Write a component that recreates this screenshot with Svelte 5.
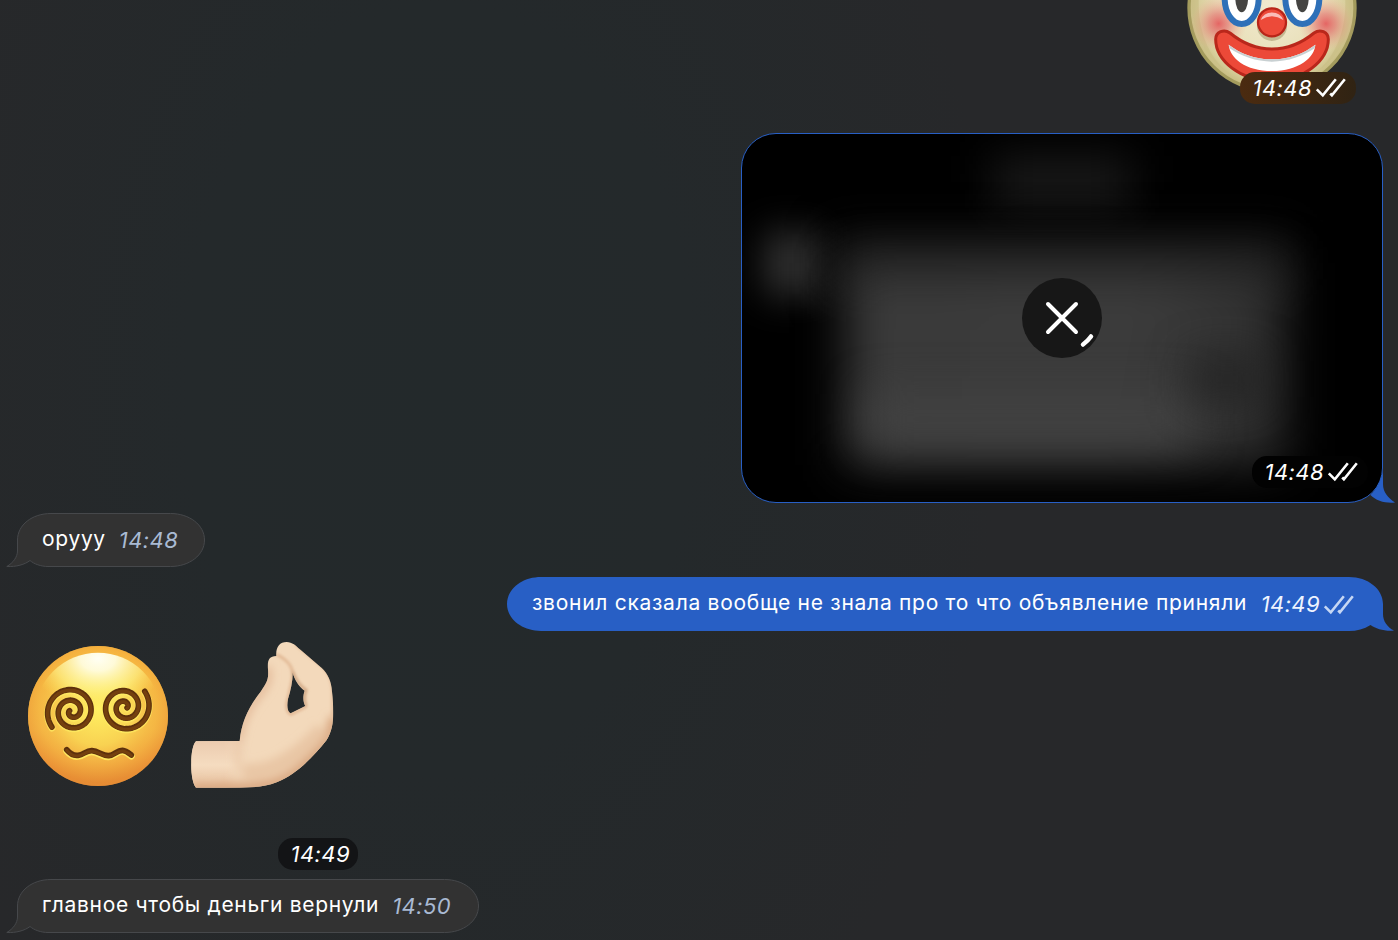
<script>
  const spiral = (cx, cy, start) => {
    let d = '';
    for (let t = -38; t <= 740; t += 6) {
      const r = Math.max(0, 73 - (t / 360) * 32);
      const a = ((start + t) * Math.PI) / 180;
      d += `${d ? 'L' : 'M'}${(cx + r * Math.cos(a)).toFixed(1)} ${(cy + r * Math.sin(a)).toFixed(1)}`;
    }
    return d;
  };
  const eyes = spiral(186, 244, 180) + spiral(344, 231, 0);

  // Outline of an incoming bubble with its tail on the left; the body starts at x = 11.5
  const incoming = (w) => {
    const r = w - 0.5;
    return `M11.5 27C11.5 12 26 .5 45 .5H${r - 34}C${r - 15} .5 ${r} 12 ${r} 27S${r - 15} 53.5 ${r - 34} 53.5H42C35 53.5 28 51 24 47.5C19 51.5 10 54 .8 53.5C7 50 11.5 44 11.5 38Z`;
  };
  const outgoing = (w) => {
    const r = w - 11;
    return `M0 27C0 12 15 0 34 0H${r - 34}C${r - 15} 0 ${r} 12 ${r} 27V37C${r} 44 ${r + 4} 50 ${r + 11} 53.6C${r + 2} 54.5 ${r - 7} 52 ${r - 12.5} 48C${r - 19} 52 ${r - 26} 54 ${r - 34} 54H34C15 54 0 42 0 27Z`;
  };
</script>

{#snippet checks()}
  <svg class="checks" width="32" height="22" viewBox="0 0 32 22">
    <path d="M1.8 12.3L7.8 18.3L20.8 2.2M15.2 16.5L16.9 18.2L29.8 2.2" />
  </svg>
{/snippet}

{#snippet received(text, time, width)}
  <div class="bubble in" style="width: {width}px">
    <svg class="shape" {width} height="54"><path d={incoming(width)} /></svg>
    <span class="text">{text}</span><time>{time}</time>
  </div>
{/snippet}

<main>
  <div class="sticker">
    <svg width="228" height="120" viewBox="0 0 684 360">
      <defs>
        <radialGradient id="skin" gradientUnits="userSpaceOnUse" cx="306" cy="20" r="255">
          <stop offset="0" stop-color="#f1ead0" /><stop offset=".65" stop-color="#e8dfb8" /><stop offset=".86" stop-color="#d9cf9d" /><stop offset="1" stop-color="#c4b97d" />
        </radialGradient>
        <radialGradient id="cheek">
          <stop offset="0" stop-color="#e4585a" stop-opacity=".9" /><stop offset=".35" stop-color="#e47270" stop-opacity=".65" /><stop offset="1" stop-color="#eeb19a" stop-opacity="0" />
        </radialGradient>
      </defs>
      <circle cx="306" cy="24" r="249" fill="url(#skin)" stroke="#a39b5d" stroke-width="10" />
      <path d="M86 0C84 100 120 180 185 225C110 180 68 110 65 0ZM526 0C528 100 492 180 427 225C502 180 544 110 547 0Z" fill="#c9bf86" opacity=".65" />
      <circle cx="146" cy="71" r="84" fill="url(#cheek)" /><circle cx="468" cy="71" r="84" fill="url(#cheek)" />
      <g fill="#fff" stroke="#2e70b8" stroke-width="18"><ellipse cx="215" cy="-5" rx="51" ry="77" /><ellipse cx="397" cy="-5" rx="51" ry="77" /></g>
      <g fill="#454442"><ellipse cx="215" cy="-4" rx="19" ry="41" /><ellipse cx="397" cy="-4" rx="19" ry="41" /></g>
      <circle cx="306" cy="78" r="45" fill="#b5a981" opacity=".75" />
      <circle cx="306" cy="67" r="42" fill="#ed4a39" stroke="#b82519" stroke-width="7" />
      <path d="M272 60A36 34 0 0 1 340 60Q306 38 272 60Z" fill="#fbc9c6" opacity=".9" />
      <path d="M137 118C137 95 162 86 180 99C214 127 255 147 306 147S398 127 432 99C450 86 475 95 475 118C475 182 400 243 306 243S137 182 137 118Z" fill="#ec4938" stroke="#b9271b" stroke-width="9" />
      <path d="M176 134C210 160 252 178 306 178S402 160 436 134C434 172 386 213 306 213S180 174 176 134Z" fill="#fff" />
      <path d="M176 134C210 160 252 178 306 178S402 160 436 134L434 145C400 168 354 185 306 185S212 168 179 145Z" fill="#c8d0d2" />
    </svg>
    <div class="badge brown"><time>14:48</time>{@render checks()}</div>
  </div>

  <div class="media">
    <div class="preview">
      <i class="blur title"></i><i class="blur avatar"></i><i class="blur haze"></i><i class="blur block"></i><i class="blur glow"></i><i class="blur dark"></i>
      <svg class="cancel" width="80" height="80" viewBox="0 0 80 80">
        <circle cx="40" cy="40" r="40" />
        <path d="M26 26L54 54M54 26L26 54" />
        <path d="M61 66.5Q65.5 63.3 69 58.5" />
      </svg>
      <div class="badge black"><time>14:48</time>{@render checks()}</div>
    </div>
    <svg class="tail" width="26" height="34" viewBox="0 0 26 34"><path d="M13 0V15C13 23 18 29 25 33.5C16 34.5 6 32 .5 26C7 20 12 10 13 0Z" /></svg>
  </div>

  {@render received('орууу', '14:48', 199)}

  <div class="bubble out" style="width: 887px">
    <svg class="shape" width="887" height="55"><path d={outgoing(887)} /></svg>
    <span class="text">звонил сказала вообще не знала про то что объявление приняли</span><time>14:49</time>{@render checks()}
  </div>

  <div class="emojis">
    <svg width="180" height="170" viewBox="0 0 540 510">
      <defs>
        <linearGradient id="face" x2="0" y2="1"><stop stop-color="#f9b83c" /><stop offset=".2" stop-color="#f9c445" /><stop offset=".6" stop-color="#f6c34a" /><stop offset=".82" stop-color="#f0a43f" /><stop offset="1" stop-color="#df8a35" /></linearGradient>
        <radialGradient id="mid" gradientUnits="userSpaceOnUse" cx="264" cy="235" r="222"><stop stop-color="#fff062" /><stop offset=".5" stop-color="#f9d553" stop-opacity=".9" /><stop offset=".8" stop-color="#f3ae40" stop-opacity=".6" /><stop offset="1" stop-color="#e98b32" stop-opacity=".6" /></radialGradient>
        <radialGradient id="shine" gradientUnits="userSpaceOnUse" cx="264" cy="85" r="150" gradientTransform="translate(264 85) scale(1.4 1) translate(-264 -85)"><stop stop-color="#fffff4" /><stop offset=".25" stop-color="#fffde0" stop-opacity=".95" /><stop offset=".65" stop-color="#fff78e" stop-opacity=".6" /><stop offset="1" stop-color="#ffe65a" stop-opacity="0" /></radialGradient>
      </defs>
      <circle cx="264" cy="258" r="210" fill="url(#face)" />
      <circle cx="264" cy="258" r="210" fill="url(#mid)" />
      <circle cx="264" cy="258" r="190" fill="url(#shine)" />
      <g fill="none" stroke-linecap="round" stroke-linejoin="round">
        <path d={eyes} stroke="#ffed62" stroke-width="21" transform="translate(0 3)" opacity=".7" />
        <path d={eyes} stroke="#5d300c" stroke-width="17" /><path d={eyes} stroke="#74400f" stroke-width="10" transform="translate(0 2)" />
        <path d="M170 359C180 371 190 378 204 376C222 374 228 361 246 362C266 363 277 378 296 377C315 375 320 360 338 361C349 362 356 369 364 375" stroke="#ffe65e" stroke-width="21" transform="translate(0 3)" />
        <path d="M170 359C180 371 190 378 204 376C222 374 228 361 246 362C266 363 277 378 296 377C315 375 320 360 338 361C349 362 356 369 364 375" stroke="#5d300c" stroke-width="17" />
        <path d="M170 361C180 373 190 380 204 378C222 376 228 363 246 364C266 365 277 380 296 379C315 377 320 362 338 363C349 364 356 371 364 377" stroke="#74400f" stroke-width="9" />
      </g>
    </svg>
    <svg class="hand" width="180" height="170" viewBox="0 0 540 510">
      <defs>
        <clipPath id="handClip"><path clip-rule="evenodd" d="M48 334L179 333C184 275 208 228 242 185C262 157 266 148 264 118C262 92 266 78 289 78C287 52 298 36 320 36C337 36 347 47 362 60L425 114C444 132 454 155 456 185C462 245 464 292 440 330C400 380 350 433 290 457C250 472 220 472 160 473H48C38 462 33 430 34 400C34 370 38 345 48 334ZM338 128C338 155 332 180 324 207C320 228 322 245 332 250L376 228C368 215 369 195 374 182C355 168 345 150 338 128Z" /></clipPath>
        <filter id="soft" x="-30%" y="-30%" width="160%" height="160%"><feGaussianBlur stdDeviation="13" /></filter>
        <filter id="fine"><feGaussianBlur stdDeviation="4" /></filter>
        <linearGradient id="wrist" x2="0" y2="1"><stop stop-color="#ebcaae" /><stop offset=".5" stop-color="#f5dcc0" /><stop offset="1" stop-color="#e4bb98" /></linearGradient>
        <linearGradient id="wristFade"><stop offset=".6" stop-color="#fff" /><stop offset="1" stop-color="#fff" stop-opacity="0" /></linearGradient>
        <mask id="wristMask"><path d="M20 320H210V490H20Z" fill="url(#wristFade)" /></mask>
      </defs>
      <g clip-path="url(#handClip)" fill="none">
        <path d="M0 0H540V510H0Z" fill="#f3d9bb" />
        <path d="M20 330H210V480H20Z" fill="url(#wrist)" mask="url(#wristMask)" />
        <g filter="url(#soft)">
          <path d="M178 330C182 270 215 220 245 185C266 157 268 140 262 110" stroke="#e2b897" stroke-width="20" />
          <path d="M462 260C462 340 370 430 290 460C230 480 120 480 40 478" stroke="#d9a781" stroke-width="34" />
          <path d="M178 340Q165 380 180 420" stroke="#e6c09f" stroke-width="16" opacity=".6" />
          <path d="M190 425Q300 440 430 300" stroke="#e6c09e" stroke-width="50" opacity=".75" />
        </g>
        <g filter="url(#fine)">
          <path d="M288 73C318 86 337 108 338 132C338 160 324 195 320 225Q320 247 333 253L378 230" stroke="#ddb08b" stroke-width="7" />
          <path d="M338 125C348 155 364 171 378 180Q368 202 378 230" stroke="#cda27e" stroke-width="8" />
          <path d="M345 42L430 112Q457 140 458 185V260" stroke="#e5bd9a" stroke-width="8" />
        </g>
      </g>
    </svg>
    <div class="badge night"><time>14:49</time></div>
  </div>

  {@render received('главное чтобы деньги вернули', '14:50', 473)}
</main>

<style>
  :global(body) { margin: 0; background: #28292a; }
  main {
    box-sizing: border-box; width: 1398px; height: 940px; overflow: hidden;
    display: flex; flex-direction: column;
    background: radial-gradient(ellipse 560px 850px at 440px 390px, #23292b 0%, #24292b 45%, #27282a 100%);
    color: #fff; font: 22px/30px Inter, sans-serif;
  }
  svg { display: block; flex: none; }
  time { font-style: italic; font-size: 22px; letter-spacing: .4px; white-space: nowrap; }
  .checks { fill: none; stroke: currentColor; stroke-width: 2.6; }
  .sticker { position: relative; width: 228px; height: 133px; align-self: flex-end; }
  .badge { position: absolute; display: flex; align-items: center; box-sizing: border-box; height: 32px; padding-left: 12.6px; border-radius: 15px; }
  .badge .checks { margin-left: 3px; }
  .brown { left: 70px; top: 72px; width: 116px; background: linear-gradient(90deg, #4b2b10, #302313); }
  .media { position: relative; align-self: flex-end; width: 642px; height: 370px; margin-right: 15px; flex: none; }
  .preview { position: relative; box-sizing: border-box; width: 642px; height: 370px; border: 1px solid #285fc5; border-radius: 35px; overflow: hidden; background: #000; }
  .tail { position: absolute; right: -13px; bottom: 0; fill: #285fc5; }
  .blur { position: absolute; filter: blur(22px); }
  .title { left: 250px; top: 22px; width: 140px; height: 52px; background: #191919; }
  .avatar { left: 22px; top: 98px; width: 58px; height: 64px; background: #303030; filter: blur(18px); }
  .haze { left: 90px; top: 100px; width: 460px; height: 60px; background: #161616; }
  .block { left: 104px; top: 129px; width: 440px; height: 202px; background: linear-gradient(100deg, #3a3a3a 0%, #3b3b3b 65%, #2b2b2b 100%); filter: blur(24px); }
  .glow { left: 125px; top: 260px; width: 330px; height: 50px; background: #424242; }
  .dark { left: 450px; top: 225px; width: 70px; height: 40px; background: #222; }
  .cancel { position: absolute; left: 280px; top: 144px; }
  .cancel circle { fill: #171717; }
  .cancel path { fill: none; stroke: #fff; stroke-width: 4; stroke-linecap: round; }
  .cancel path:last-child { stroke-width: 4.5; }
  .black { left: 510px; top: 322px; width: 116px; background: #020202; }
  .bubble { position: relative; display: flex; box-sizing: border-box; height: 54px; margin-top: 10px; flex: none; white-space: nowrap; }
  .shape { position: absolute; left: 0; top: 0; overflow: visible; }
  .text { position: relative; padding-top: 11px; font-size: 21px; letter-spacing: .72px; }
  .bubble time { position: relative; padding-top: 12px; margin-left: 13.5px; }
  .bubble .checks { position: relative; margin: 17px 0 0 3px; color: #c6d7f4; }
  .in { margin-left: 6px; padding-left: 36px; }
  .in .text { letter-spacing: .68px; }
  .in .shape { fill: #323232; stroke: #46484b; stroke-width: 1; }
  .in time { color: #a9bad3; margin-left: 13px; }
  .out { align-self: flex-end; margin-right: 4px; padding-left: 25px; }
  .out .shape { fill: #285fc5; }
  .out time { color: #eef4ff; }
  .emojis { position: relative; display: flex; height: 238px; flex: none; padding-left: 10px; box-sizing: border-box; }
  .emojis > svg { margin-top: -1px; }
  .hand { margin-left: -10px; }
  .night { left: 278px; top: 207px; width: 80px; background: #131416; }
</style>
